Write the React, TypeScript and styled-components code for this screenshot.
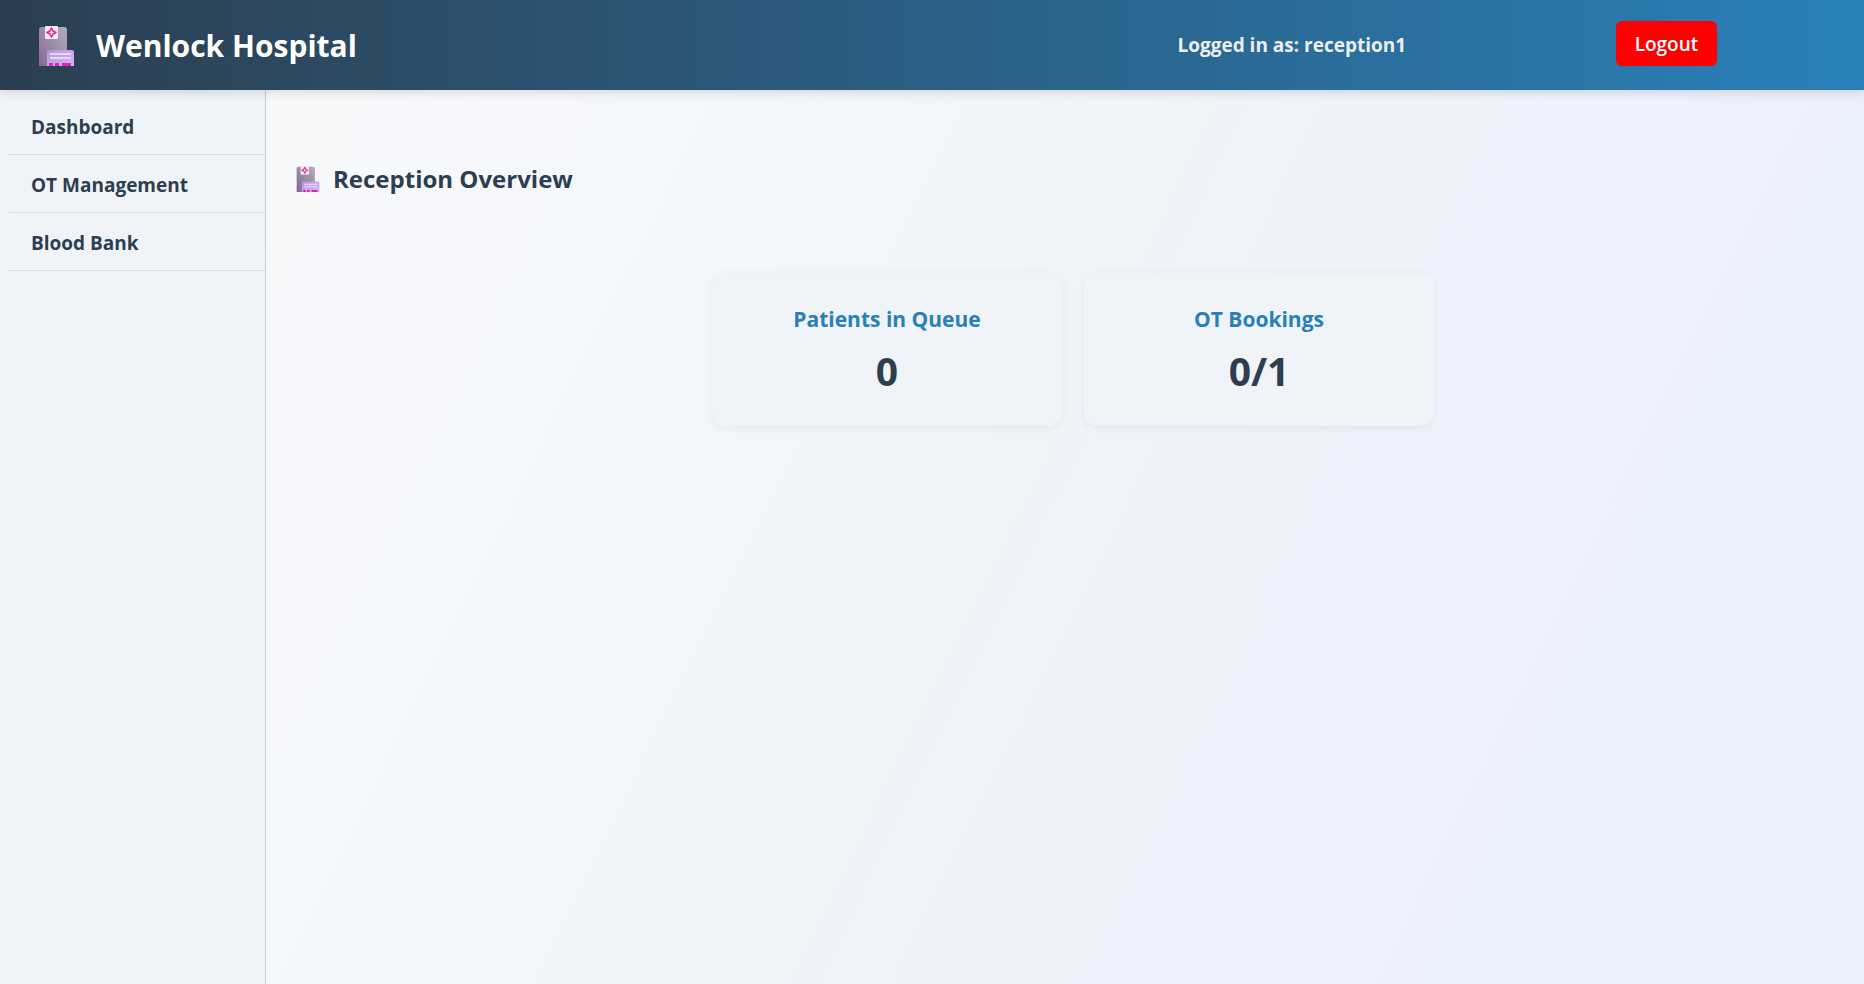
import React from 'react';
import styled, { createGlobalStyle } from 'styled-components';

const GlobalStyle = createGlobalStyle`
  * { box-sizing: border-box; }
  html, body, #root { min-height: 100vh; }
  body {
    margin: 0;
    font-family: 'Segoe UI', 'Open Sans', 'Noto Sans', sans-serif;
    color: #2c3e50;
  }
  h1, h2, h3, p, ul { margin: 0; padding: 0; }
`;

const Page = styled.div`
  display: flex;
  flex-direction: column;
  min-height: 100vh;
`;

const Header = styled.header`
  position: relative;
  z-index: 1;
  display: flex;
  align-items: center;
  justify-content: space-between;
  height: 90px;
  padding: 0 42px 0 38px;
  background: linear-gradient(90deg, #2c3e50, #2980b9);
  box-shadow: 0 2px 10px rgba(0, 0, 0, 0.15);
`;

const Brand = styled.h1`
  display: flex;
  align-items: center;
  gap: 18px;
  padding-top: 2px;
  color: #ffffff;
  font-size: 30px;
  font-weight: 700;
  line-height: 42px;
  white-space: nowrap;
`;

const HospitalIcon = styled.svg<{ $size: number }>`
  flex: none;
  width: ${({ $size }) => $size}px;
  height: ${({ $size }) => $size}px;
`;

const Session = styled.div`
  display: flex;
  align-items: center;
  justify-content: space-around;
  width: 42%;
  padding-bottom: 4px;
`;

const UserLabel = styled.span`
  padding-top: 4px;
  color: #ecf0f1;
  font-size: 19px;
  font-weight: 700;
`;

const LogoutButton = styled.button`
  padding: 10px 19px 8px;
  border: 0;
  border-radius: 6px;
  background: #ff0000;
  color: #ffffff;
  font-family: inherit;
  font-size: 19px;
  font-weight: 600;
  line-height: 27px;
  cursor: pointer;
`;

const Body = styled.div`
  display: flex;
  flex: 1;
`;

const Sidebar = styled.nav`
  flex: none;
  width: 266px;
  padding: 7px 0 0 9px;
  border-right: 1px solid #cccccc;
  background: #f0f4f8;
`;

const NavList = styled.ul`
  list-style: none;
`;

const NavItem = styled.li`
  border-bottom: 1px solid #dddddd;
`;

const NavLink = styled.a`
  display: block;
  padding: 17px 22px 13px;
  color: #2c3e50;
  font-size: 19px;
  font-weight: 700;
  line-height: 27px;
  text-decoration: none;
`;

const Main = styled.main`
  flex: 1;
  padding: 70px 14px 30px 30px;
  background: linear-gradient(116deg, #f9f9fb, #f4f7fb 22%, #f0f4f9 47%, #eff3fc 52%, #ecf1fb 76%, #e8f1fb);
`;

const Heading = styled.h2`
  display: flex;
  align-items: center;
  gap: 11px;
  font-size: 24px;
  font-weight: 700;
  line-height: 38px;
`;

const Stats = styled.div`
  display: flex;
  flex-wrap: wrap;
  justify-content: center;
  gap: 22px;
  padding: 75px 0 0;
`;

const Card = styled.section`
  width: 350px;
  padding: 30px;
  border-radius: 14px;
  background: #f0f4f8;
  box-shadow: 0 2px 10px rgba(0, 0, 0, 0.06);
  text-align: center;
`;

const CardTitle = styled.h3`
  color: #2980b9;
  font-size: 21px;
  font-weight: 700;
  line-height: 32px;
`;

const CardValue = styled.p`
  padding-top: 11px;
  font-size: 39px;
  font-weight: 700;
  line-height: 50px;
`;

function Hospital({ size, id }: { size: number; id: string }) {
  return (
    <HospitalIcon $size={size} viewBox="0 0 40 40" aria-hidden="true">
      <defs>
        <linearGradient id={`${id}-tower`} x1="0" y1="1" x2="1" y2="0">
          <stop offset="0" stopColor="#83689c" />
          <stop offset="0.5" stopColor="#998ca3" />
          <stop offset="1" stopColor="#b5aeba" />
        </linearGradient>
        <linearGradient id={`${id}-wing`} x1="0" y1="0" x2="1" y2="1">
          <stop offset="0" stopColor="#b696dc" />
          <stop offset="1" stopColor="#d6b4fa" />
        </linearGradient>
      </defs>
      <path d="M1 40V4q0-3 3-3h22q3 0 3 3v36z" fill={`url(#${id}-tower)`} />
      <path d="M9 40V26q0-2 2-2h23q2 0 2 2v14z" fill={`url(#${id}-wing)`} />
      <rect x="7" y="0" width="13" height="13" rx="1" fill="#f1e9fb" />
      <path
        d="M12 5l1.500-3 1.500 3 3 1.500-3 1.500-1.500 3-1.500-3-3-1.500z"
        fill="#f8e7f8"
        stroke="#e5267f"
        strokeWidth="1.600"
        strokeLinejoin="round"
      />
      <path d="M12 28h21M12 32h21" stroke="#f3e8ff" strokeWidth="1.400" />
      <path d="M11 40v-3h4v3zM17 40v-3h4v3zM24 40v-3h9v3z" fill="#dc27ae" />
    </HospitalIcon>
  );
}

const links = ['Dashboard', 'OT Management', 'Blood Bank'];

const stats = [
  { title: 'Patients in Queue', value: '0' },
  { title: 'OT Bookings', value: '0/1' },
];

export default function App() {
  return (
    <Page>
      <GlobalStyle />
      <Header>
        <Brand>
          <Hospital size={40} id="brand" />
          Wenlock Hospital
        </Brand>
        <Session>
          <UserLabel>Logged in as: reception1</UserLabel>
          <LogoutButton type="button">Logout</LogoutButton>
        </Session>
      </Header>
      <Body>
        <Sidebar aria-label="Main">
          <NavList>
            {links.map((label) => (
              <NavItem key={label}>
                <NavLink href="#">{label}</NavLink>
              </NavItem>
            ))}
          </NavList>
        </Sidebar>
        <Main>
          <Heading>
            <Hospital size={26} id="overview" />
            Reception Overview
          </Heading>
          <Stats>
            {stats.map(({ title, value }) => (
              <Card key={title}>
                <CardTitle>{title}</CardTitle>
                <CardValue>{value}</CardValue>
              </Card>
            ))}
          </Stats>
        </Main>
      </Body>
    </Page>
  );
}
